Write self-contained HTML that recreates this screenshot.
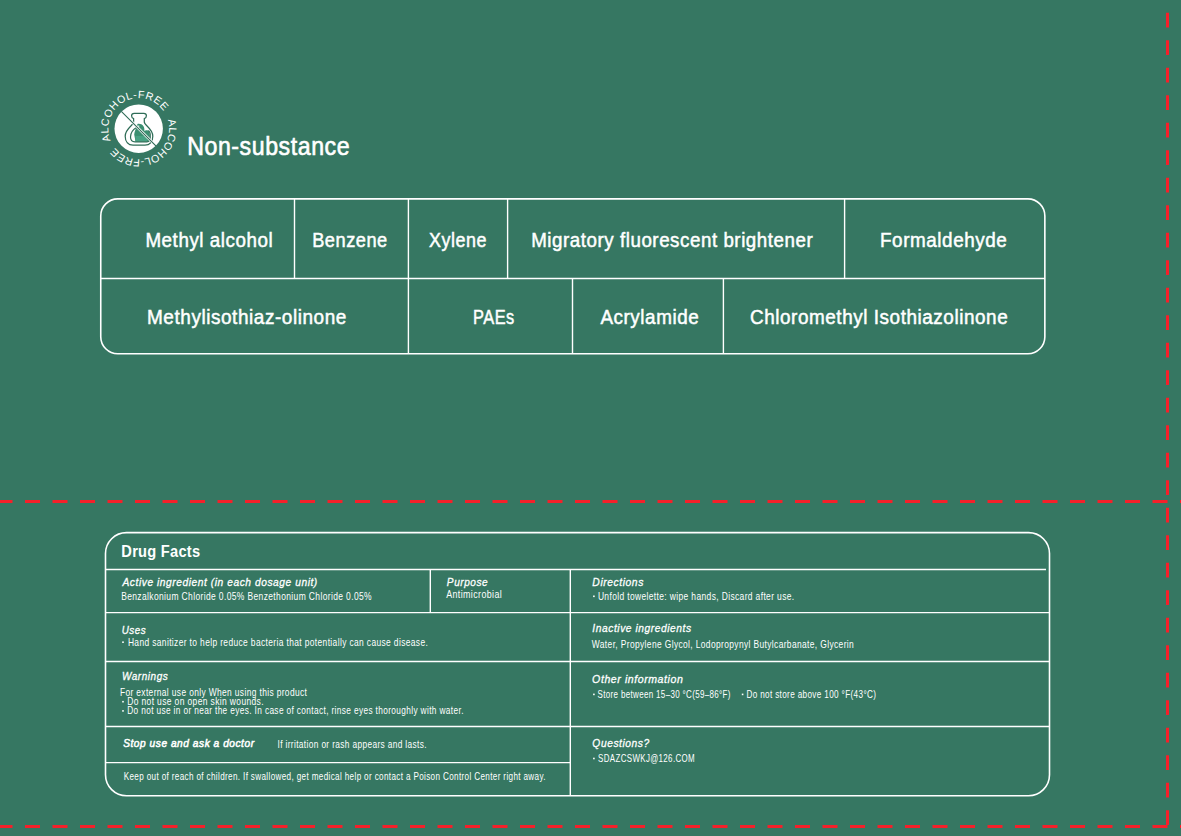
<!DOCTYPE html>
<html><head><meta charset="utf-8"><title>Label</title>
<style>
html,body{margin:0;padding:0;}
body{width:1181px;height:836px;background:#367762;overflow:hidden;position:relative;font-family:"Liberation Sans",sans-serif;}
svg{position:absolute;left:0;top:0;display:block;}
text{font-family:"Liberation Sans",sans-serif;fill:#fff;}
</style></head><body>
<svg width="1181" height="836" viewBox="0 0 1181 836">

<g stroke="#f5202a" stroke-width="3" fill="none">
<line x1="-2.5" y1="501.5" x2="1181" y2="501.5" stroke-dasharray="15 12.5"/>
<line x1="-2.5" y1="826.5" x2="1181" y2="826.5" stroke-dasharray="15 12.5"/>
<line x1="1167.5" y1="12.7" x2="1167.5" y2="836" stroke-dasharray="14.8 12.7"/>
</g>
<g stroke="#fff" fill="none">
<rect x="100.75" y="198.9" width="944.1" height="154.8" rx="17" ry="17" stroke-width="1.6"/>
<g stroke-width="1.4">
<line x1="100.75" y1="278.5" x2="1044.85" y2="278.5"/>
<line x1="294.5" y1="198.9" x2="294.5" y2="278.5"/>
<line x1="408.4" y1="198.9" x2="408.4" y2="278.5"/>
<line x1="507.6" y1="198.9" x2="507.6" y2="278.5"/>
<line x1="844.6" y1="198.9" x2="844.6" y2="278.5"/>
<line x1="408.4" y1="278.5" x2="408.4" y2="353.7"/>
<line x1="572.5" y1="278.5" x2="572.5" y2="353.7"/>
<line x1="723.4" y1="278.5" x2="723.4" y2="353.7"/>
</g>
<rect x="105.5" y="532.6" width="944" height="263.2" rx="21" ry="21" stroke-width="1.6"/>
<g stroke-width="1.4">
<line x1="105.5" y1="569.5" x2="1046" y2="569.5"/>
<line x1="105.5" y1="612.6" x2="1049.5" y2="612.6"/>
<line x1="105.5" y1="661.5" x2="1049.5" y2="661.5"/>
<line x1="105.5" y1="726.5" x2="1049.5" y2="726.5"/>
<line x1="105.5" y1="762.6" x2="570.3" y2="762.6"/>
<line x1="570.3" y1="569.5" x2="570.3" y2="795.8"/>
<line x1="430.3" y1="569.5" x2="430.3" y2="612.6"/>
</g></g>
<text transform="translate(187.18 155.0) scale(0.9268 1)" font-size="25" font-weight="normal" font-style="normal" letter-spacing="0.6" stroke="#fff" stroke-width="0.6">Non-substance</text>
<text transform="translate(145.41 246.7) scale(0.9235 1)" font-size="20.35" font-weight="normal" font-style="normal" letter-spacing="0.6" stroke="#fff" stroke-width="0.5">Methyl alcohol</text>
<text transform="translate(312.16 246.7) scale(0.8954 1)" font-size="20.35" font-weight="normal" font-style="normal" letter-spacing="0.6" stroke="#fff" stroke-width="0.5">Benzene</text>
<text transform="translate(429.00 246.7) scale(0.8806 1)" font-size="20.35" font-weight="normal" font-style="normal" letter-spacing="0.6" stroke="#fff" stroke-width="0.5">Xylene</text>
<text transform="translate(531.22 246.7) scale(0.9206 1)" font-size="20.35" font-weight="normal" font-style="normal" letter-spacing="0.6" stroke="#fff" stroke-width="0.5">Migratory fluorescent brightener</text>
<text transform="translate(880.01 246.7) scale(0.9286 1)" font-size="20.35" font-weight="normal" font-style="normal" letter-spacing="0.6" stroke="#fff" stroke-width="0.5">Formaldehyde</text>
<text transform="translate(147.00 324.2) scale(0.9327 1)" font-size="20.35" font-weight="normal" font-style="normal" letter-spacing="0.6" stroke="#fff" stroke-width="0.5">Methylisothiaz-olinone</text>
<text transform="translate(473.09 324.2) scale(0.8041 1)" font-size="20.35" font-weight="normal" font-style="normal" letter-spacing="0.6" stroke="#fff" stroke-width="0.5">PAEs</text>
<text transform="translate(600.43 324.2) scale(0.9267 1)" font-size="20.35" font-weight="normal" font-style="normal" letter-spacing="0.6" stroke="#fff" stroke-width="0.5">Acrylamide</text>
<text transform="translate(750.00 324.2) scale(0.9293 1)" font-size="20.35" font-weight="normal" font-style="normal" letter-spacing="0.6" stroke="#fff" stroke-width="0.5">Chloromethyl Isothiazolinone</text>
<text transform="translate(121.32 556.7) scale(0.8771 1)" font-size="16.7" font-weight="bold" font-style="normal" letter-spacing="0.3">Drug Facts</text>
<text transform="translate(122.50 586.2) scale(0.9279 1)" font-size="11" font-weight="normal" font-style="italic" letter-spacing="0.6" stroke="#fff" stroke-width="0.3">Active ingredient (in each dosage unit)</text>
<text transform="translate(446.87 586.2) scale(0.9159 1)" font-size="11" font-weight="normal" font-style="italic" letter-spacing="0.6" stroke="#fff" stroke-width="0.3">Purpose</text>
<text transform="translate(592.37 586.3) scale(0.9389 1)" font-size="11" font-weight="normal" font-style="italic" letter-spacing="0.6" stroke="#fff" stroke-width="0.3">Directions</text>
<text transform="translate(121.73 634.2) scale(0.8923 1)" font-size="11" font-weight="normal" font-style="italic" letter-spacing="0.6" stroke="#fff" stroke-width="0.3">Uses</text>
<text transform="translate(592.37 632.3) scale(0.9302 1)" font-size="11" font-weight="normal" font-style="italic" letter-spacing="0.6" stroke="#fff" stroke-width="0.3">Inactive ingredients</text>
<text transform="translate(122.02 680.3) scale(0.9065 1)" font-size="11" font-weight="normal" font-style="italic" letter-spacing="0.6" stroke="#fff" stroke-width="0.3">Warnings</text>
<text transform="translate(592.12 683.0) scale(0.9600 1)" font-size="11" font-weight="normal" font-style="italic" letter-spacing="0.6" stroke="#fff" stroke-width="0.3">Other information</text>
<text transform="translate(123.20 747.2) scale(0.9210 1)" font-size="11" font-weight="normal" font-style="italic" letter-spacing="0.6" stroke="#fff" stroke-width="0.55">Stop use and ask a doctor</text>
<text transform="translate(592.37 747.3) scale(0.9328 1)" font-size="11" font-weight="normal" font-style="italic" letter-spacing="0.6" stroke="#fff" stroke-width="0.3">Questions?</text>
<text transform="translate(121.18 599.6) scale(0.8244 1)" font-size="10.3" font-weight="normal" font-style="normal" letter-spacing="0.45">Benzalkonium Chloride 0.05% Benzethonium Chloride 0.05%</text>
<text transform="translate(446.20 598.1) scale(0.8643 1)" font-size="10.3" font-weight="normal" font-style="normal" letter-spacing="0.45">Antimicrobial</text>
<text transform="translate(597.88 599.8) scale(0.8219 1)" font-size="10.3" font-weight="normal" font-style="normal" letter-spacing="0.45">Unfold towelette: wipe hands, Discard after use.</text>
<text transform="translate(127.89 645.7) scale(0.8184 1)" font-size="10.3" font-weight="normal" font-style="normal" letter-spacing="0.45">Hand sanitizer to help reduce bacteria that potentially can cause disease.</text>
<text transform="translate(591.80 647.8) scale(0.8185 1)" font-size="10.3" font-weight="normal" font-style="normal" letter-spacing="0.45">Water, Propylene Glycol, Lodopropynyl Butylcarbanate, Glycerin</text>
<text transform="translate(119.89 696.1) scale(0.8162 1)" font-size="10.3" font-weight="normal" font-style="normal" letter-spacing="0.45">For external use only When using this product</text>
<text transform="translate(127.18 705.2) scale(0.8238 1)" font-size="10.3" font-weight="normal" font-style="normal" letter-spacing="0.45">Do not use on open skin wounds.</text>
<text transform="translate(127.19 714.4) scale(0.8067 1)" font-size="10.3" font-weight="normal" font-style="normal" letter-spacing="0.45">Do not use in or near the eyes. In case of contact, rinse eyes thoroughly with water.</text>
<text transform="translate(597.61 697.9) scale(0.7742 1)" font-size="10.3" font-weight="normal" font-style="normal" letter-spacing="0.45">Store between 15–30 °C(59–86°F)</text>
<text transform="translate(746.41 697.9) scale(0.7920 1)" font-size="10.3" font-weight="normal" font-style="normal" letter-spacing="0.45">Do not store above 100 °F(43°C)</text>
<text transform="translate(277.49 747.5) scale(0.8088 1)" font-size="10.3" font-weight="normal" font-style="normal" letter-spacing="0.45">If irritation or rash appears and lasts.</text>
<text transform="translate(123.71 780.4) scale(0.7891 1)" font-size="10.3" font-weight="normal" font-style="normal" letter-spacing="0.45">Keep out of reach of children. If swallowed, get medical help or contact a Poison Control Center right away.</text>
<text transform="translate(598.11 762.0) scale(0.7718 1)" font-size="10.3" font-weight="normal" font-style="normal" letter-spacing="0.45">SDAZCSWKJ@126.COM</text>
<rect x="593.10" y="595.50" width="1.6" height="1.6" fill="#fff"/>
<rect x="122.20" y="641.40" width="1.6" height="1.6" fill="#fff"/>
<rect x="122.20" y="700.90" width="1.6" height="1.6" fill="#fff"/>
<rect x="122.20" y="710.10" width="1.6" height="1.6" fill="#fff"/>
<rect x="593.10" y="693.60" width="1.6" height="1.6" fill="#fff"/>
<rect x="741.80" y="693.60" width="1.6" height="1.6" fill="#fff"/>
<rect x="593.10" y="757.70" width="1.6" height="1.6" fill="#fff"/>
<g id="icon">
<circle cx="138.7" cy="128.7" r="24.2" fill="#fff"/>
<defs><path id="ringA" d="M 110.62 140.62 A 30.5 30.5 0 0 1 166.78 116.78 A 30.5 30.5 0 0 1 110.62 140.62"/></defs>
<path d="M133.6,122 L133.6,118.6 Q131.6,118 131.6,115.8 Q131.6,113.3 134.2,113.3 L143.8,113.3 Q146.4,113.3 146.4,115.8 Q146.4,118 144.3,118.6 L144.3,122 C144.3,125.5 152.8,128.5 152.8,136.3 C152.8,141.8 149.6,145.1 145,145.1 L133,145.1 C128.4,145.1 125.2,141.8 125.2,136.3 C125.2,128.5 133.6,125.5 133.6,122 Z" fill="none" stroke="#2f6d57" stroke-width="1.25"/>
<path d="M135.5,141.4 L134.2,134.5 C134.5,131.2 136,128.6 137,126.2 L137.4,124 C139.5,123.5 142,124.2 143.5,126.2 C144.4,128 144.5,129.5 144.3,131 C145.2,130.3 146.6,130 148,130.6 C149.5,131.8 149.9,134 149.9,137 L149.9,140 C149.6,141.1 148.6,141.5 147,141.5 Z" fill="#3a8f70"/>
<rect x="135.4" y="135.9" width="11.8" height="5.6" fill="#47a182"/>
<path d="M138,125.4 L139.5,125.7 L138.7,127.8 Z" fill="#fff"/>
<path d="M136.4,127.6 C132.8,129.8 130.6,133 130.5,137 C130.5,139.8 132.2,141.8 135,141.8 L147,141.8 C149,141.8 150.2,140.5 150.2,138 L150.2,134 C150.2,132.8 149.6,131.6 148.4,130.5" fill="none" stroke="#2f6d57" stroke-width="1.2"/>
<line x1="122.2" y1="112.2" x2="155.2" y2="145.2" stroke="#fff" stroke-width="2.6"/>
<line x1="121.3" y1="111.3" x2="156.1" y2="146.1" stroke="#2d6a55" stroke-width="1.1"/>
<g font-size="10.6" fill="#fff" font-family="Liberation Sans">
<text><textPath href="#ringA" textLength="88.9" lengthAdjust="spacing">ALCOHOL-FREE</textPath></text>
<text><textPath href="#ringA" startOffset="98.9" textLength="83.7" lengthAdjust="spacing">ALCOHOL-FREE</textPath></text>
</g>
</g>
</svg></body></html>
